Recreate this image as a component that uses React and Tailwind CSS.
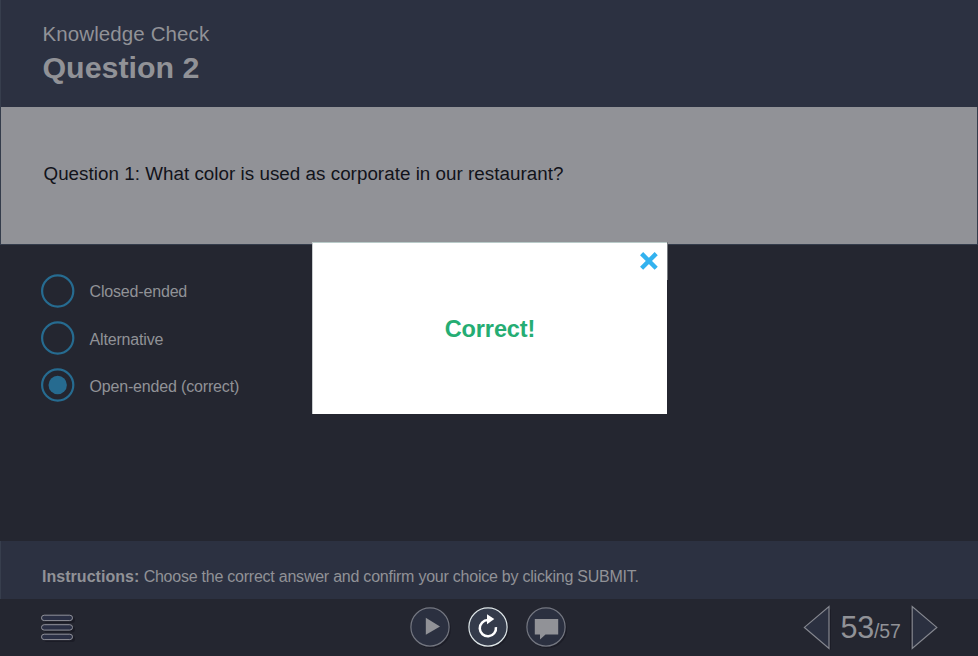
import React from "react";

const answers = [
  { label: "Closed-ended", checked: false },
  { label: "Alternative", checked: false },
  { label: "Open-ended (correct)", checked: true },
];

const Radio = ({ checked }) => (
  <svg width="34" height="34" viewBox="0 0 34 34" className="shrink-0">
    <circle cx="16.7" cy="17" r="15.6" fill="none" stroke="#266b90" strokeWidth="2.2" />
    {checked && <circle cx="16.7" cy="17" r="9.2" fill="#266b90" />}
  </svg>
);

const RoundButton = ({ label, active, children }) => (
  <button aria-label={label} className="h-10 w-10">
    <svg width="44" height="44" viewBox="0 0 44 44" className="overflow-visible">
      <circle cx="21.5" cy="21.8" r="19.5" fill="#1c1d27" />
      <circle
        cx="20"
        cy="20"
        r="19.1"
        fill={active ? "#343b4b" : "#2b3040"}
        stroke={active ? "#dfe7e9" : "#747781"}
        strokeWidth="1.2"
      />
      {children}
    </svg>
  </button>
);

const MenuIcon = () => (
  <svg width="38" height="32" viewBox="0 0 38 32">
    {[0, 9.5, 19].map((y) => (
      <g key={y}>
        <rect x="4" y={y + 3} width="31" height="6" rx="3" fill="#1b1c26" />
        <rect x="1.5" y={y + 1.2} width="31" height="5.4" rx="2.7" fill="#2b3045" stroke="#91929a" />
      </g>
    ))}
  </svg>
);

const Feedback = () => (
  <div className="absolute left-[312px] top-[242px] flex h-[172px] w-[355px] items-center justify-center border-l border-t border-l-[#c9cdcf] border-t-[#b9cbc9] bg-white">
    <span className="pt-0.5 text-[23.5px] font-bold leading-none tracking-[-0.1px] text-[#25ad73]">Correct!</span>
    <button aria-label="Close" className="absolute right-[9px] top-[9px]">
      <svg width="18" height="18" viewBox="0 0 18 18">
        <path d="M1.6 1.6 16.2 16.2M16.2 1.6 1.6 16.2" stroke="#33b2ef" strokeWidth="4.4" />
      </svg>
    </button>
    <div className="absolute -right-px -top-px h-[38px] w-px bg-[#777b80]" />
  </div>
);

const App = () => {
  return (
    <div className="relative flex h-[656px] w-[978px] flex-col overflow-hidden bg-[#242630] font-['Liberation_Sans',Arial,sans-serif] text-[#919297]">
      <header className="h-[107px] border-l border-[#373e4d] bg-[#2c3141] pl-[41.5px] pt-[22px]">
        <p className="h-6 text-[20.5px] leading-6 tracking-[0.1px]">Knowledge Check</p>
        <h1 className="mt-[3px] text-[30.4px] font-bold leading-9 tracking-[-0.02px]">Question 2</h1>
      </header>

      <section className="flex h-[138px] items-start border-x border-b border-[#343c4b] bg-[#919297] pl-[42.5px] pt-[55px]">
        <p className="whitespace-nowrap text-[18.8px] leading-6 tracking-[0.035px] text-[#11131a]">
          Question 1: What color is used as corporate in our restaurant?
        </p>
      </section>

      <main className="h-[296px] pl-[41px] pt-[29px]">
        <ul className="flex flex-col gap-[13px]">
          {answers.map((answer, index) => (
            <li key={answer.label} className="flex h-[34px] items-center gap-[14.5px]">
              <Radio checked={answer.checked} />
              <span className={`text-base leading-6 tracking-[-0.17px] ${index === 0 ? "pt-0.5" : "pt-1"}`}>
                {answer.label}
              </span>
            </li>
          ))}
        </ul>
      </main>

      <section className="h-[58px] border-l border-[#373e4d] bg-[#2c3141] pl-[41px] pt-6">
        <p className="whitespace-nowrap text-base leading-6 tracking-[-0.235px]">
          <b className="tracking-[0.04px]">Instructions:</b> Choose the correct answer and confirm your choice by
          clicking SUBMIT.
        </p>
      </section>

      <footer className="flex h-[57px] items-start">
        <div className="w-[410px] pl-10 pt-[15px]">
          <button aria-label="Menu">
            <MenuIcon />
          </button>
        </div>
        <div className="flex w-[393px] gap-[18px] pt-2">
          <RoundButton label="Play">
            <path d="M15.8 10.8v17L30 19.5z" fill="#919297" />
          </RoundButton>
          <RoundButton label="Replay" active>
            <path d="M20 13.1a8.1 8.1 0 1 0 7.9 7" fill="none" stroke="#fff" strokeWidth="2.5" />
            <path d="M19 7.2v10l7.3-5.2z" fill="#fff" />
          </RoundButton>
          <RoundButton label="Comments">
            <path d="M8.8 12h23.4v15.5H19.5l-5.5 5v-5H8.8z" fill="#919297" />
          </RoundButton>
        </div>
        <div className="flex pt-1.5">
          <button aria-label="Previous">
            <svg width="30" height="46" viewBox="0 0 30 46">
              <path d="M28 4v41L5 25z" fill="#1c1d27" />
              <path d="M26 1.5v42L1.4 22.4z" fill="#2b3040" stroke="#85878f" strokeWidth="1.2" />
            </svg>
          </button>
          <p className="w-[77px] whitespace-nowrap pl-[7.5px] pt-1 text-[30.5px] leading-9 tracking-[-0.2px]">
            53<span className="text-[19.5px]">/57</span>
          </p>
          <button aria-label="Next">
            <svg width="30" height="46" viewBox="0 0 30 46" className="overflow-visible">
              <path d="M0 4v41L22 25z" fill="#1c1d27" />
              <path d="M2.2 1.5v42l24.6-21.1z" fill="#2b3040" stroke="#85878f" strokeWidth="1.2" />
            </svg>
          </button>
        </div>
      </footer>

      <Feedback />
    </div>
  );
};

export default App;
